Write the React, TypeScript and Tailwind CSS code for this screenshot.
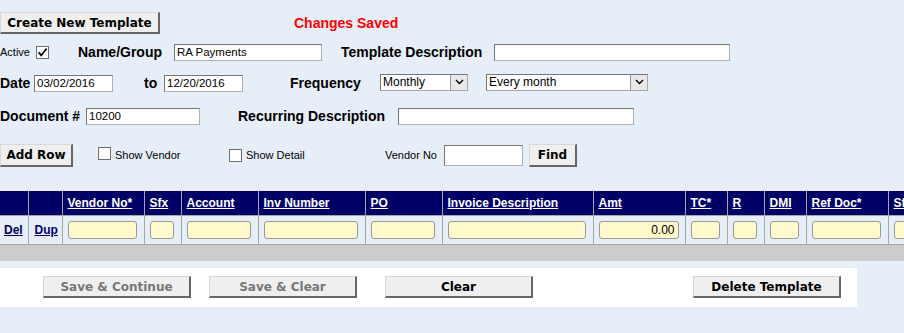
import React from "react";

const inputBase =
  "h-[17px] bg-white border border-[#767676] border-r-[#b0b0b0] border-b-[#b0b0b0] px-[2px] text-[11.5px] leading-[15px] text-black outline-none";

const btnBase =
  "flex items-center justify-center bg-[#efefef] border-t border-l border-t-[#d8d8d8] border-l-[#d8d8d8] border-r-2 border-b-2 border-r-[#666] border-b-[#666] font-['DejaVu_Sans',sans-serif] font-bold text-[12px]";

function Check({ checked }: { checked?: boolean }) {
  return (
    <span className="inline-flex h-[13px] w-[13px] shrink-0 items-center justify-center border border-[#6f6f6f] bg-white">
      {checked && (
        <svg width="11" height="11" viewBox="0 0 11 11">
          <path d="M1.6 5.4 L4.2 8.4 L9.6 1.6" fill="none" stroke="#000" strokeWidth="1.7" />
        </svg>
      )}
    </span>
  );
}

function Select({ className, value }: { className: string; value: string }) {
  return (
    <div className={`flex h-[17px] border border-[#767676] border-r-[#a8a8a8] border-b-[#a8a8a8] bg-white ${className}`}>
      <span className="flex-1 pl-[2px] text-[12px] leading-[15px] text-black">{value}</span>
      <span className="flex w-[17px] items-center justify-center border-l border-[#9a9a9a] bg-[#e8e8e8]">
        <svg width="9" height="6" viewBox="0 0 9 6">
          <path d="M1 1 L4.5 4.5 L8 1" fill="none" stroke="#000" strokeWidth="1.4" />
        </svg>
      </span>
    </div>
  );
}

const cols = [
  { label: "", w: "w-[28px]", iw: "" },
  { label: "", w: "w-[34px]", iw: "" },
  { label: "Vendor No*", w: "w-[82px]", iw: "w-[69px]" },
  { label: "Sfx", w: "w-[37px]", iw: "w-[24px]" },
  { label: "Account", w: "w-[77px]", iw: "w-[64px]" },
  { label: "Inv Number", w: "w-[107px]", iw: "w-[94px]" },
  { label: "PO", w: "w-[77px]", iw: "w-[64px]" },
  { label: "Invoice Description", w: "w-[151px]", iw: "w-[138px]" },
  { label: "Amt", w: "w-[92px]", iw: "w-[80px]" },
  { label: "TC*", w: "w-[42px]", iw: "w-[29px]" },
  { label: "R", w: "w-[37px]", iw: "w-[24px]" },
  { label: "DMI", w: "w-[42px]", iw: "w-[29px]" },
  { label: "Ref Doc*", w: "w-[82px]", iw: "w-[69px]" },
  { label: "Sfx", w: "w-[60px]", iw: "w-[47px]" },
];

export default function App() {
  return (
    <div className="h-[333px] w-[904px] overflow-hidden bg-[#e6eef8] font-['Liberation_Sans',Arial,sans-serif] text-black">
      {/* top */}
      <div className="mt-[12px] flex h-[22px] items-center">
        <button className={`${btnBase} h-[22px] w-[160px] text-black`}>Create New Template</button>
        <span className="ml-[134px] text-[14px] font-bold text-[#ff0000]">Changes Saved</span>
      </div>

      {/* row 1 */}
      <div className="mt-[8px] flex h-[20px] items-center">
        <span className="w-[36px] text-[11px]">Active</span>
        <Check checked />
        <span className="ml-[29px] w-[96px] text-[14px] font-bold">Name/Group</span>
        <input className={`${inputBase} w-[148px]`} defaultValue="RA Payments" />
        <span className="ml-[19px] w-[153px] text-[14px] font-bold">Template Description</span>
        <input className={`${inputBase} w-[236px]`} defaultValue="" />
      </div>

      {/* row 2 */}
      <div className="mt-[11px] flex h-[20px] items-center">
        <span className="w-[34px] text-[14px] font-bold">Date</span>
        <input className={`${inputBase} w-[79px]`} defaultValue="03/02/2016" />
        <span className="ml-[31px] w-[20px] text-[14px] font-bold">to</span>
        <input className={`${inputBase} w-[79px]`} defaultValue="12/20/2016" />
        <span className="ml-[47px] w-[90px] text-[14px] font-bold">Frequency</span>
        <Select className="-mt-[2px] w-[88px]" value="Monthly" />
        <Select className="-mt-[2px] ml-[18px] w-[162px]" value="Every month" />
      </div>

      {/* row 3 */}
      <div className="mt-[13px] flex h-[20px] items-center">
        <span className="w-[86px] text-[14px] font-bold">Document #</span>
        <input className={`${inputBase} w-[114px]`} defaultValue="10200" />
        <span className="ml-[38px] w-[160px] text-[14px] font-bold">Recurring Description</span>
        <input className={`${inputBase} w-[236px]`} defaultValue="" />
      </div>

      {/* row 4 */}
      <div className="mt-[17px] flex h-[24px] items-center">
        <button className={`${btnBase} h-[23px] w-[73px] text-black`}>Add Row</button>
        <span className="ml-[25px]">
          <Check />
        </span>
        <span className="ml-[4px] w-[114px] text-[11px]">Show Vendor</span>
        <Check />
        <span className="ml-[4px] w-[139px] text-[11px]">Show Detail</span>
        <span className="w-[59px] text-[11px]">Vendor No</span>
        <input className={`${inputBase} h-[21px] w-[79px]`} defaultValue="" />
        <button className={`${btnBase} ml-[6px] h-[23px] w-[48px] text-black`}>Find</button>
      </div>

      {/* grid */}
      <div className="mt-[24px] w-[904px] overflow-hidden">
        <table className="w-[948px] table-fixed border-collapse text-[12px]">
          <thead>
            <tr className="h-[24px] bg-[#000066]">
              {cols.map((c, i) => (
                <th
                  key={i}
                  className={`${c.w} overflow-hidden whitespace-nowrap border border-t-0 border-l-0 border-[#a6a6a6] pl-[5px] text-left font-bold text-white underline`}
                >
                  {c.label}
                </th>
              ))}
            </tr>
          </thead>
          <tbody>
            <tr className="h-[29px]">
              <td className="border border-l-0 border-[#a6a6a6] pl-[4px] font-bold text-[#000066] underline">Del</td>
              <td className="border border-[#a6a6a6] pl-[6px] font-bold text-[#000066] underline">Dup</td>
              {cols.slice(2).map((c, i) => (
                <td key={i} className="border border-[#a6a6a6] pl-[5px]">
                  <input
                    className={`${c.iw} h-[18px] rounded-[3px] border border-[#9a9a9a] bg-[#fff9cc] px-[3px] text-right text-[12px] leading-[16px] outline-none`}
                    defaultValue={c.label === "Amt" ? "0.00" : ""}
                  />
                </td>
              ))}
            </tr>
          </tbody>
        </table>
      </div>
      <div className="h-[16px] w-[904px] bg-[#cccccc]" />

      {/* actions */}
      <div className="mt-[7px] flex h-[39px] w-[857px] items-center bg-white">
        <button className={`${btnBase} ml-[43px] h-[22px] w-[148px] text-[#777]`}>Save &amp; Continue</button>
        <button className={`${btnBase} ml-[18px] h-[22px] w-[148px] text-[#777]`}>Save &amp; Clear</button>
        <button className={`${btnBase} ml-[28px] h-[22px] w-[148px] text-black`}>Clear</button>
        <button className={`${btnBase} ml-[160px] h-[22px] w-[148px] text-black`}>Delete Template</button>
      </div>
    </div>
  );
}
